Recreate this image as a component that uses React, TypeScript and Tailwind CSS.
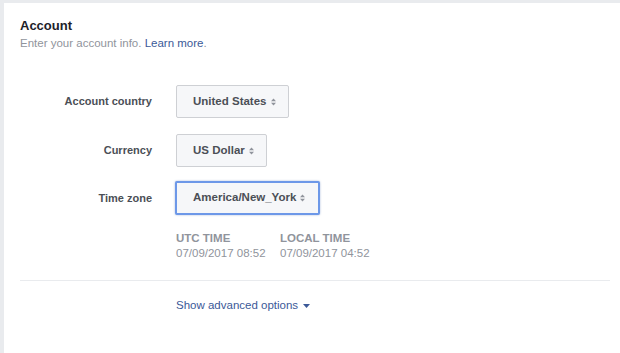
import React from "react";

function Arrows() {
  return (
    <svg width="5" height="8" viewBox="0 0 5 8" className="ml-[4px]" fill="#90949c">
      <path d="M2.5 0.5 L5 3.2 L0 3.2 Z" />
      <path d="M0 4.8 L5 4.8 L2.5 7.5 Z" />
    </svg>
  );
}

function SelectBtn({ label, focused = false }: { label: string; focused?: boolean }) {
  return (
    <div
      className={
        focused
          ? "flex h-[34px] items-center rounded-[2px] border-2 border-[#6d98e8] bg-[#f6f7f9] pl-[16px] pr-[13px] text-[11.5px] font-bold text-[#4b4f56] shadow-[0_0_2px_rgba(66,103,178,0.5)]"
          : "flex h-[33px] items-center rounded-[2px] border border-[#ced0d4] bg-[#f6f7f9] pl-[16px] pr-[12px] text-[11.5px] font-bold text-[#4b4f56]"
      }
    >
      <span>{label}</span>
      <Arrows />
    </div>
  );
}

export default function App() {
  return (
    <div
      className="h-[353px] w-[620px] overflow-hidden bg-[#e9ebee] pl-[4px] pt-[3px]"
      style={{ fontFamily: '"Liberation Sans", Arial, sans-serif' }}
    >
      <div className="h-full w-full bg-white pl-[16px] pr-[10px] pt-[14px]">
        <div className="text-[13px] font-bold leading-[18px] text-[#1d2129]">Account</div>
        <div className="text-[11.5px] leading-[16px] text-[#90949c]">
          Enter your account info. <span className="text-[#3b5998]">Learn more</span>.
        </div>

        <div className="ml-[-16px] mt-[34px] flex flex-col">
          <div className="flex items-center">
            <div className="w-[148px] text-right text-[11px] font-bold text-[#4b4f56]">Account country</div>
            <div className="ml-[24px]">
              <SelectBtn label="United States" />
            </div>
          </div>
          <div className="mt-[16px] flex items-center">
            <div className="w-[148px] text-right text-[11px] font-bold text-[#4b4f56]">Currency</div>
            <div className="ml-[24px]">
              <SelectBtn label="US Dollar" />
            </div>
          </div>
          <div className="mt-[14px] flex items-center">
            <div className="w-[148px] text-right text-[11px] font-bold text-[#4b4f56]">Time zone</div>
            <div className="ml-[23px]">
              <SelectBtn label="America/New_York" focused />
            </div>
          </div>
        </div>

        <div className="ml-[156px] mt-[16px] flex text-[11.5px] leading-[15px] text-[#90949c]">
          <div className="w-[104px]">
            <div className="font-bold">UTC TIME</div>
            <div>07/09/2017 08:52</div>
          </div>
          <div>
            <div className="font-bold">LOCAL TIME</div>
            <div>07/09/2017 04:52</div>
          </div>
        </div>

        <div className="mt-[19px] h-px bg-[#e9ebee]" />

        <div className="ml-[156px] mt-[16px] flex items-center text-[11.5px] text-[#3b5998]">
          <span>Show advanced options</span>
          <svg width="7" height="4" viewBox="0 0 7 4" className="ml-[5px]" fill="#3b5998">
            <path d="M0 0 L7 0 L3.5 4 Z" />
          </svg>
        </div>
      </div>
    </div>
  );
}
